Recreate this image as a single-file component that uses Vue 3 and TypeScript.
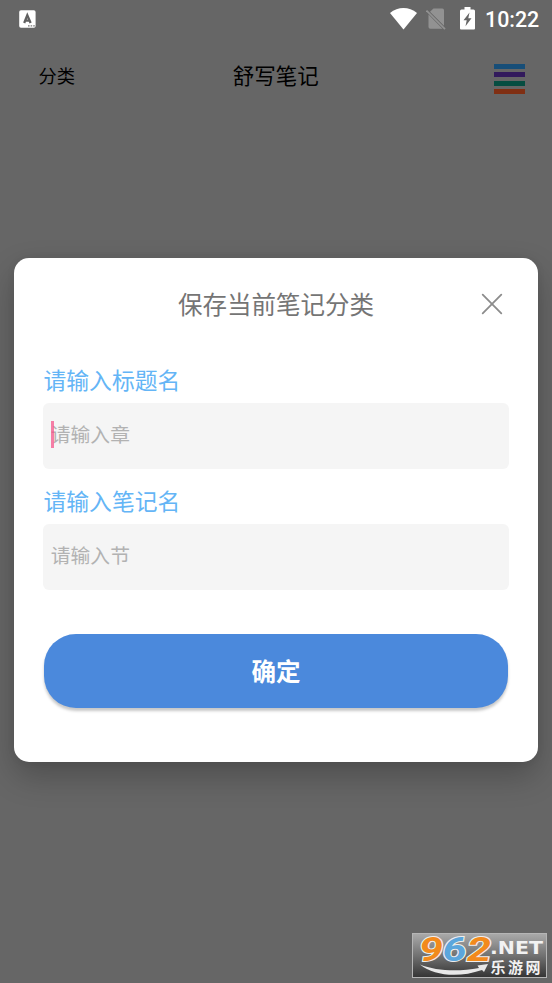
<script setup lang="ts">
import { ref } from 'vue'

interface Field {
  label: string
  hint: string
  focused: boolean
}

const fields = ref<Field[]>([
  { label: '请输入标题名', hint: '请输入章', focused: true },
  { label: '请输入笔记名', hint: '请输入节', focused: false },
])
const bars: string[] = ['blue', 'purple', 'green', 'orange']
</script>

<template>
  <div class="screen">
    <div class="status">
      <svg class="ime" width="17" height="18" viewBox="0 0 17 18">
        <rect x="0.2" y="0.2" width="16.4" height="17.6" rx="1.8" fill="#fff" />
        <path d="M5.200 13 8.300 5.200 11.600 13M6.200 10.700h4.400" fill="none" stroke="#606060" stroke-width="2.300" />
        <path d="M9 15.800h1.600M11.600 15.800h1.600M14.200 15.800h1.600" stroke="#777" stroke-width="1.200" />
      </svg>
      <div class="status-right">
        <svg class="wifi" width="27" height="22" viewBox="0 0 27 22">
          <path d="M0 5C8-1.600 19-1.600 27 5L13.500 21.500Z" fill="#fff" />
        </svg>
        <svg class="sim" width="20" height="22" viewBox="0 0 20 22">
          <path d="M7.500 0.500H16.300Q18 0.500 18 2.200V17.800L4 3.800ZM2.500 6.600 16.500 20.800H4.300Q2.500 20.800 2.500 19Z" fill="#929292" />
          <path d="M0.500 2.500 19 21.200" stroke="#929292" stroke-width="1.700" />
        </svg>
        <svg class="battery" width="15" height="23" viewBox="0 0 15 23">
          <path d="M4.500 0H10.500V2.500H13.500Q15 2.500 15 4V21.500Q15 22.500 14 22.500H1Q0 22.500 0 21.500V4Q0 2.500 1.500 2.500H4.500Z" fill="#fff" />
          <path d="M9.500 5.500 3.500 13.300H6.700L5.500 19.300 11.500 11.300H8.300Z" fill="#666" />
        </svg>
        <span class="time">10:22</span>
      </div>
    </div>
    <header class="bar">
      <span class="category">分类</span>
      <span class="app-title">舒写笔记</span>
      <span class="menu"><i v-for="b in bars" :key="b" :class="b"></i></span>
    </header>

    <div class="overlay">
      <section class="dialog">
        <div class="dialog-head">
          <h1>保存当前笔记分类</h1>
          <svg class="close" width="22" height="22" viewBox="0 0 22 22">
            <path d="M1.700 1.700 20.300 20.300M20.300 1.700 1.700 20.300" stroke="#8c8c8c" stroke-width="1.800" stroke-linecap="round" />
          </svg>
        </div>
        <div v-for="f in fields" :key="f.label" class="field">
          <div class="label">{{ f.label }}</div>
          <div class="input">
            <span class="hint">{{ f.hint }}</span>
            <i v-if="f.focused" class="caret"></i>
          </div>
        </div>
        <button class="confirm">确定</button>
      </section>
    </div>

    <div class="mark">
      <svg width="135" height="45" viewBox="0 0 135 45">
        <defs>
          <linearGradient id="plate" x1="0" y1="0" x2="0" y2="1">
            <stop offset="0" stop-color="#aaa" />
            <stop offset="0.500" stop-color="#727272" />
            <stop offset="1" stop-color="#343434" />
          </linearGradient>
        </defs>
        <rect x="0.500" y="0.500" width="134" height="44" fill="url(#plate)" stroke="#b5b5b5" />
        <g class="digits">
          <text x="7" y="27.500" textLength="24" lengthAdjust="spacingAndGlyphs" fill="#f28a1c">9</text>
          <text x="30.500" y="27.500" textLength="24" lengthAdjust="spacingAndGlyphs" fill="#5ba6dc">6</text>
          <text x="55" y="27.500" textLength="24" lengthAdjust="spacingAndGlyphs" fill="#f28a1c">2</text>
        </g>
        <path d="M8 31.500C24 38 46 39 67 35L65.500 32.500 76 31 72 39 70 37C47 45 22 43 8 31.500Z" fill="#e8e8e8" />
        <text class="net" x="78" y="21" textLength="53" lengthAdjust="spacingAndGlyphs">.NET</text>
        <text class="site" x="78.500" y="40" textLength="50">乐游网</text>
      </svg>
    </div>
  </div>
</template>

<style>
body {
  margin: 0;
  background: #666;
}
</style>

<style scoped>
.screen {
  position: relative;
  width: 552px;
  height: 983px;
  overflow: hidden;
  background: #666;
  font-family: "Noto Sans CJK SC", sans-serif;
}
.status {
  display: flex;
  justify-content: space-between;
  align-items: center;
  box-sizing: border-box;
  height: 38px;
  padding: 0 12px 2px 19px;
}
.status-right {
  display: flex;
  align-items: center;
}
.ime {
  margin-top: 1px;
}
.wifi,
.sim {
  margin-top: 1px;
}
.sim {
  margin-left: 9px;
}
.battery {
  margin-left: 14px;
}
.time {
  width: 55px;
  margin-left: 10px;
  padding-top: 3px;
  font: 500 21.4px/35px Roboto, sans-serif;
  color: #fff;
  white-space: nowrap;
}
.bar {
  display: grid;
  grid-template-columns: 1fr auto 1fr;
  align-items: center;
  height: 76px;
  padding: 0 27.5px 2px 38.5px;
  box-sizing: border-box;
  color: #000;
}
.category {
  font-size: 18.3px;
}
.app-title {
  margin: 0 11.5px 2px 0;
  font-size: 21.5px;
}
.menu {
  display: flex;
  flex-direction: column;
  justify-self: end;
  gap: 3.6px;
  width: 31px;
  margin-top: 8px;
}
.menu i {
  height: 4.9px;
}
.blue { background: #174e78; }
.purple { background: #321a5c; }
.green { background: #064d41; }
.orange { background: #802f13; }
.overlay {
  position: absolute;
  inset: 0;
  padding: 258px 14px 0;
}
.dialog {
  height: 504px;
  box-sizing: border-box;
  padding: 0 29px;
  border-radius: 15px;
  background: #fff;
  box-shadow: 0 14px 32px rgba(0, 0, 0, 0.24), 0 0 8px rgba(0, 0, 0, 0.06);
}
.dialog-head {
  display: grid;
  grid-template-columns: 1fr auto 1fr;
  align-items: center;
  height: 92px;
  margin-bottom: 8px;
}
.dialog-head h1 {
  grid-column: 2;
  margin: 0 0 2px;
  font-size: 24.5px;
  font-weight: 400;
  color: #757575;
}
.close {
  justify-self: end;
  margin-right: 6px;
}
.field {
  height: 121px;
}
.label {
  height: 45px;
  padding-left: 0.5px;
  font-size: 22.8px;
  line-height: 43px;
  color: #64b5f6;
}
.input {
  position: relative;
  box-sizing: border-box;
  height: 66px;
  padding-left: 7.8px;
  border-radius: 6px;
  background: #f5f5f5;
  font-size: 19.8px;
  line-height: 62px;
  color: #b2b2b2;
}
.caret {
  position: absolute;
  left: 7.5px;
  top: 18px;
  width: 3.5px;
  height: 27px;
  background: rgba(245, 75, 133, 0.7);
}
.confirm {
  display: block;
  width: 464px;
  height: 74px;
  margin: 34px auto 0;
  padding: 0;
  border: 0;
  border-radius: 32px;
  background: #4b89dc;
  box-shadow: 0 3px 3px rgba(0, 0, 0, 0.22);
  color: #fff;
  font: 700 24.5px/74px "Noto Sans CJK SC", sans-serif;
}
.mark {
  position: absolute;
  left: 412px;
  top: 933px;
}
.mark svg {
  display: block;
  overflow: visible;
}
.digits text {
  font: italic 700 33px Roboto, sans-serif;
  stroke: #eee;
  stroke-width: 2px;
  paint-order: stroke;
}
.net {
  font: 700 17px "DejaVu Sans", sans-serif;
  fill: #f2f2f2;
}
.site {
  font: 700 15px "Noto Sans CJK SC", sans-serif;
  fill: #f2f2f2;
}
</style>
